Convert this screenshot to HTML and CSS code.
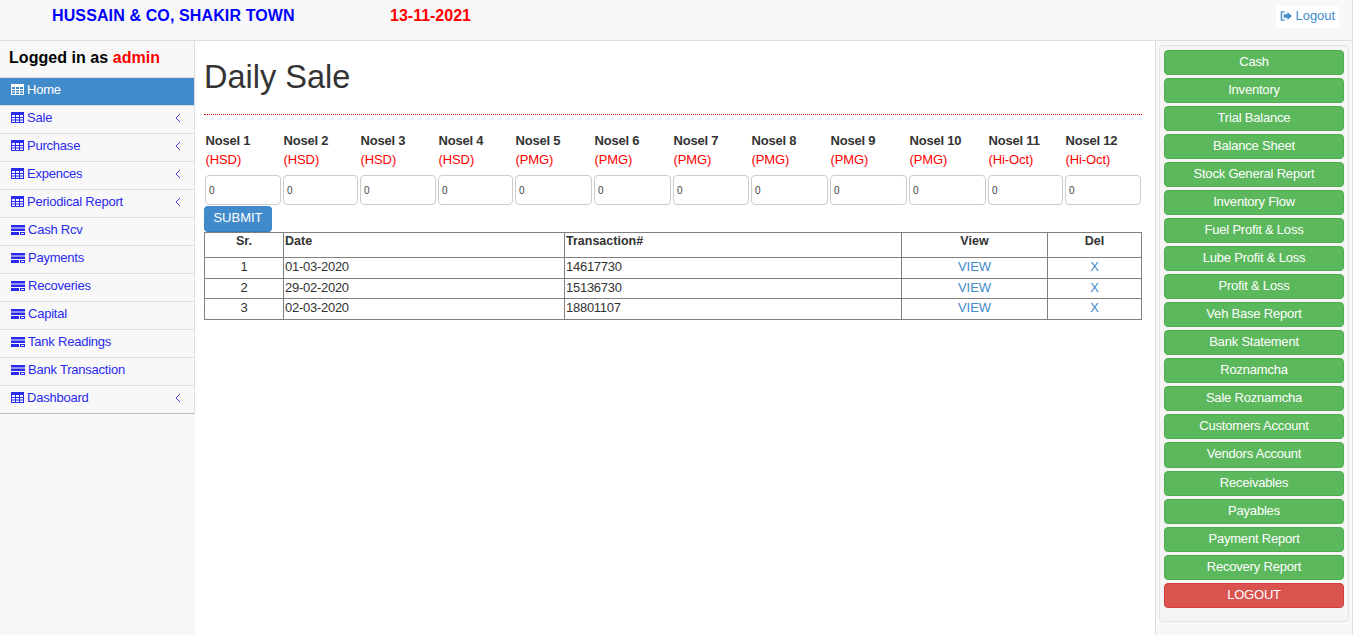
FILE: index.html
```html
<!DOCTYPE html>
<html lang="en">
<head>
    <meta charset="UTF-8">
    <meta name="viewport" content="width=device-width, initial-scale=1.0">
    <title>Daily Sale</title>
    <link rel="stylesheet" href="styles.css">
</head>
<body>
<svg class="icon-defs" width="0" height="0">
    <symbol id="i-table" viewBox="0 0 13 11">
        <path d="M0 0h13v11H0z M1 3v2h3V3z M5 3v2h3V3z M9 3v2h3V3z M1 6v1.500h3V6z M5 6v1.500h3V6z M9 6v1.500h3V6z M1 8.500V10h3V8.500z M5 8.500V10h3V8.500z M9 8.500V10h3V8.500z" fill-rule="evenodd"/>
    </symbol>
    <symbol id="i-rows" viewBox="0 0 14 10">
        <path d="M0 0h14v2.500H0z M0 3.500h14V6H0z M0 7h8v3H0z M9 7h5v3H9z M10 8v1h3V8z" fill-rule="evenodd"/>
    </symbol>
    <symbol id="i-back" viewBox="0 0 6 10">
        <path d="M5 1 1 5l4 4" fill="none" stroke="currentColor" stroke-width="1"/>
    </symbol>
</svg>

<div class="page">
    <header class="topbar">
        <span class="firm">HUSSAIN &amp; CO, SHAKIR TOWN</span>
        <span class="today">13-11-2021</span>
        <a class="logout-link" href="#">
            <svg class="logout-icon" viewBox="0 0 13 11" width="12" height="10">
                <path d="M5 1H1.500v9H5" fill="none" stroke="currentColor" stroke-width="1.500"/>
                <path d="M4 3.500h4V1l5 4.500L8 10V7.500H4z" fill="currentColor"/>
            </svg>
            Logout
        </a>
    </header>

    <div class="columns">
        <aside class="sidebar">
            <div class="who">Logged in as <span class="who-name">admin</span></div>
            <nav class="menu">
                <a class="menu-item active" href="#"><svg class="ico"><use href="#i-table"/></svg>Home</a>
                <a class="menu-item" href="#"><svg class="ico"><use href="#i-table"/></svg>Sale<svg class="arrow"><use href="#i-back"/></svg></a>
                <a class="menu-item" href="#"><svg class="ico"><use href="#i-table"/></svg>Purchase<svg class="arrow"><use href="#i-back"/></svg></a>
                <a class="menu-item" href="#"><svg class="ico"><use href="#i-table"/></svg>Expences<svg class="arrow"><use href="#i-back"/></svg></a>
                <a class="menu-item" href="#"><svg class="ico"><use href="#i-table"/></svg>Periodical Report<svg class="arrow"><use href="#i-back"/></svg></a>
                <a class="menu-item" href="#"><svg class="ico wide"><use href="#i-rows"/></svg>Cash Rcv</a>
                <a class="menu-item" href="#"><svg class="ico wide"><use href="#i-rows"/></svg>Payments</a>
                <a class="menu-item" href="#"><svg class="ico wide"><use href="#i-rows"/></svg>Recoveries</a>
                <a class="menu-item" href="#"><svg class="ico wide"><use href="#i-rows"/></svg>Capital</a>
                <a class="menu-item" href="#"><svg class="ico wide"><use href="#i-rows"/></svg>Tank Readings</a>
                <a class="menu-item" href="#"><svg class="ico wide"><use href="#i-rows"/></svg>Bank Transaction</a>
                <a class="menu-item last" href="#"><svg class="ico"><use href="#i-table"/></svg>Dashboard<svg class="arrow"><use href="#i-back"/></svg></a>
            </nav>
        </aside>

        <main class="content">
            <h1 class="title">Daily Sale</h1>
            <hr class="rule">

            <form class="nosels">
                <div class="nosel"><b>Nosel 1</b><span>(HSD)</span><input type="text" value="0"></div>
                <div class="nosel"><b>Nosel 2</b><span>(HSD)</span><input type="text" value="0"></div>
                <div class="nosel"><b>Nosel 3</b><span>(HSD)</span><input type="text" value="0"></div>
                <div class="nosel"><b>Nosel 4</b><span>(HSD)</span><input type="text" value="0"></div>
                <div class="nosel"><b>Nosel 5</b><span>(PMG)</span><input type="text" value="0"></div>
                <div class="nosel"><b>Nosel 6</b><span>(PMG)</span><input type="text" value="0"></div>
                <div class="nosel"><b>Nosel 7</b><span>(PMG)</span><input type="text" value="0"></div>
                <div class="nosel"><b>Nosel 8</b><span>(PMG)</span><input type="text" value="0"></div>
                <div class="nosel"><b>Nosel 9</b><span>(PMG)</span><input type="text" value="0"></div>
                <div class="nosel"><b>Nosel 10</b><span>(PMG)</span><input type="text" value="0"></div>
                <div class="nosel"><b>Nosel 11</b><span>(Hi-Oct)</span><input type="text" value="0"></div>
                <div class="nosel"><b>Nosel 12</b><span>(Hi-Oct)</span><input type="text" value="0"></div>
            </form>
            <button class="submit" type="button">SUBMIT</button>

            <table class="sales">
                <thead>
                    <tr>
                        <th class="c-sr">Sr.</th>
                        <th class="c-date left">Date</th>
                        <th class="c-trans left">Transaction#</th>
                        <th class="c-view">View</th>
                        <th>Del</th>
                    </tr>
                </thead>
                <tbody>
                    <tr><td class="mid">1</td><td>01-03-2020</td><td>14617730</td><td class="mid"><a href="#">VIEW</a></td><td class="mid"><a href="#">X</a></td></tr>
                    <tr><td class="mid">2</td><td>29-02-2020</td><td>15136730</td><td class="mid"><a href="#">VIEW</a></td><td class="mid"><a href="#">X</a></td></tr>
                    <tr><td class="mid">3</td><td>02-03-2020</td><td>18801107</td><td class="mid"><a href="#">VIEW</a></td><td class="mid"><a href="#">X</a></td></tr>
                </tbody>
            </table>
        </main>

        <aside class="reports">
            <div class="well">
                <a class="btn" href="#">Cash</a>
                <a class="btn" href="#">Inventory</a>
                <a class="btn" href="#">Trial Balance</a>
                <a class="btn" href="#">Balance Sheet</a>
                <a class="btn" href="#">Stock General Report</a>
                <a class="btn" href="#">Inventory Flow</a>
                <a class="btn" href="#">Fuel Profit &amp; Loss</a>
                <a class="btn" href="#">Lube Profit &amp; Loss</a>
                <a class="btn" href="#">Profit &amp; Loss</a>
                <a class="btn" href="#">Veh Base Report</a>
                <a class="btn" href="#">Bank Statement</a>
                <a class="btn" href="#">Roznamcha</a>
                <a class="btn" href="#">Sale Roznamcha</a>
                <a class="btn" href="#">Customers Account</a>
                <a class="btn" href="#">Vendors Account</a>
                <a class="btn" href="#">Receivables</a>
                <a class="btn" href="#">Payables</a>
                <a class="btn" href="#">Payment Report</a>
                <a class="btn" href="#">Recovery Report</a>
                <a class="btn danger" href="#">LOGOUT</a>
            </div>
        </aside>
    </div>
</div>
</body>
</html>
```

FILE: styles.css
```css
* {
    box-sizing: border-box;
}
body, html {
    margin: 0;
    padding: 0;
    height: 100%;
    overflow: hidden;
    font-family: "Liberation Sans", Arial, sans-serif;
    font-size: 13px;
    color: #333;
    background-color: #fff;
}
a {
    text-decoration: none;
}
.icon-defs {
    display: block;
    height: 0;
}
.page {
    width: 1353px;
    height: 635px;
    display: flex;
    flex-direction: column;
    border-right: 1px solid #ddd;
}
.topbar {
    height: 41px;
    flex: none;
    display: flex;
    align-items: flex-start;
    background-color: #f8f8f8;
    border-bottom: 1px solid #ddd;
    padding: 6px 13px 0 52px;
}
.firm {
    width: 338px;
    font-size: 16px;
    line-height: 19px;
    font-weight: bold;
    letter-spacing: 0.12px;
    color: #0000ff;
}
.today {
    font-size: 16px;
    line-height: 19px;
    font-weight: bold;
    color: #ff0000;
}
.logout-link {
    margin-left: auto;
    height: 22px;
    width: 63px;
    line-height: 20px;
    padding-left: 4px;
    white-space: nowrap;
    background-color: #fff;
    color: #428bca;
    font-size: 13px;
    letter-spacing: -0.05px;
}
.logout-icon {
    vertical-align: -1px;
}
.columns {
    flex: 1;
    display: flex;
    min-height: 0;
}
.sidebar {
    width: 195px;
    flex: none;
    background-color: #f8f8f8;
}
.who {
    height: 37px;
    padding: 7px 0 0 9px;
    font-size: 16px;
    line-height: 20px;
    font-weight: bold;
    letter-spacing: 0.05px;
    color: #000;
    border-bottom: 1px solid #ddd;
    border-right: 1px solid #ddd;
}
.who-name {
    color: #ff0000;
}
.menu {
    border-right: 1px solid #ddd;
}
.menu-item {
    height: 28px;
    display: flex;
    align-items: center;
    padding: 0 0 4px 11px;
    color: #2a2aee;
    letter-spacing: -0.22px;
    border-bottom: 1px solid #ddd;
}
.menu-item.active {
    background-color: #428bca;
    color: #fff;
}
.menu-item.last {
    border-bottom-color: #bbb;
}
.ico {
    width: 13px;
    height: 11px;
    margin-right: 3px;
    fill: currentColor;
}
.ico.wide {
    width: 14px;
    height: 10px;
    margin-right: 3px;
}
.arrow {
    width: 6px;
    height: 10px;
    margin-left: auto;
    margin-right: 13px;
    color: #4848dd;
}
.content {
    width: 961px;
    flex: none;
    padding: 0 0 0 9px;
    border-right: 1px solid #ddd;
}
.title {
    margin: 20px 0 0;
    font-size: 32.500px;
    line-height: 33px;
    font-weight: normal;
    color: #333;
}
.rule {
    margin: 20px 13px 0 0;
    height: 0;
    border: 0;
    border-top: 1px dotted #c00;
}
.nosels {
    display: grid;
    grid-template-columns: 78px 77px 78px 77px 79px 79px 78px 79px 79px 79px 77px 78px;
    margin: 17px 0 0 1px;
}
.nosel b {
    display: block;
    padding-left: 0.500px;
    font-size: 13px;
    line-height: 18px;
    letter-spacing: -0.2px;
    color: #333;
}
.nosel span {
    display: block;
    margin-top: 1px;
    padding-left: 0.500px;
    font-size: 13px;
    line-height: 17px;
    letter-spacing: -0.1px;
    color: #ff0000;
}
.nosel input {
    display: block;
    width: calc(100% - 2px);
    height: 30px;
    margin-top: 7px;
    padding: 0 3px;
    font-family: "Liberation Sans", Arial, sans-serif;
    font-size: 10px;
    color: #444;
    border: 1px solid #ccc;
    border-radius: 4px;
    background: #fff;
}
.submit {
    display: block;
    height: 26px;
    width: 68px;
    margin-top: 1px;
    padding: 0 0 4px;
    font-family: "Liberation Sans", Arial, sans-serif;
    font-size: 13px;
    color: #fff;
    background-color: #428bca;
    border: 1px solid #428bca;
    border-bottom-color: #357ebd;
    border-radius: 4px;
}
.sales {
    width: 938px;
    border-collapse: collapse;
    table-layout: fixed;
    font-size: 13px;
}
.sales th, .sales td {
    border: 1px solid #808080;
    padding: 0 1px;
    vertical-align: top;
}
.sales th {
    height: 25px;
    font-size: 12.500px;
    line-height: 17px;
    text-align: center;
}
.sales th.left {
    text-align: left;
}
.sales td {
    height: 20.500px;
    line-height: 18px;
    letter-spacing: -0.27px;
}
.sales td.mid {
    text-align: center;
    letter-spacing: 0;
}
.sales a {
    color: #428bca;
}
.c-sr {
    width: 79px;
}
.c-date {
    width: 281px;
}
.c-trans {
    width: 337px;
}
.c-view {
    width: 146px;
}
.reports {
    flex: 1;
    padding: 4px 0 0 3px;
    background-color: #f8f8f8;
}
.well {
    height: 577px;
    width: 190px;
    display: flex;
    flex-direction: column;
    gap: 3px;
    padding: 3.800px 4px 0;
    background-color: #f5f5f5;
    border: 1px solid #e3e3e3;
    border-radius: 4px;
}
.btn {
    height: 25.050px;
    flex: none;
    line-height: 21px;
    text-align: center;
    font-size: 13px;
    letter-spacing: -0.2px;
    color: #fff;
    background-color: #5cb85c;
    border: 1px solid #4cae4c;
    border-radius: 4px;
}
.btn.danger {
    background-color: #d9534f;
    border-color: #d43f3a;
}
```
